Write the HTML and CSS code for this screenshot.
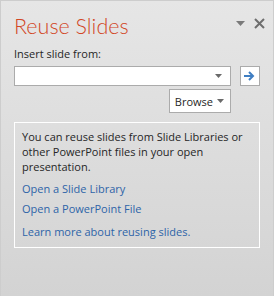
FILE: index.html
```html
<!DOCTYPE html>
<html lang="en">
<head>
  <meta charset="UTF-8" />
  <title>Reuse Slides</title>
  <link rel="stylesheet" href="styles.css">
</head>
<body>
  <div class="pane">
    <div class="header">
      <h1>Reuse Slides</h1>
      <div class="tools">
        <svg class="tool-arrow" width="9" height="5" viewBox="0 0 9 5"><path d="M0 0h9L4.5 5z" fill="#7a7a7a"/></svg>
        <svg class="tool-close" width="11" height="11" viewBox="0 0 11 11"><path d="M1 1l9 9M10 1l-9 9" stroke="#6e6e6e" stroke-width="2"/></svg>
      </div>
    </div>

    <div class="label">Insert slide from:</div>
    <div class="row">
      <div class="combo">
        <svg width="7" height="4" viewBox="0 0 7 4"><path d="M0 0h7L3.5 4z" fill="#6a6a6a"/></svg>
      </div>
      <div class="go">
        <svg width="12" height="10" viewBox="0 0 12 10"><path d="M0 5h9M5 1l4 4-4 4" stroke="#3f7ec2" stroke-width="2" fill="none"/></svg>
      </div>
    </div>
    <div class="browse-row">
      <div class="browse">Browse
        <svg width="7" height="4" viewBox="0 0 7 4"><path d="M0 0h7L3.5 4z" fill="#6a6a6a"/></svg>
      </div>
    </div>

    <div class="info">
      <p>You can reuse slides from Slide Libraries or other PowerPoint files in your open presentation.</p>
      <a href="#">Open a Slide Library</a>
      <a href="#">Open a PowerPoint File</a>
      <a href="#" class="learn">Learn more about reusing slides.</a>
    </div>
  </div>
</body>
</html>
```

FILE: styles.css
```css
body {
  margin: 0;
  font-family: 'Open Sans', 'Noto Sans', sans-serif;
  font-size: 11px;
  color: #262626;
}
.pane {
  width: 274px;
  height: 296px;
  box-sizing: border-box;
  padding: 0 13px 0 13px;
  border: 1px solid #cdcdcd;
  border-bottom: none;
  background: linear-gradient(#e6e6e6, #d3d3d3);
}
.header {
  display: flex;
  justify-content: space-between;
  align-items: flex-start;
  height: 42px;
}
h1 {
  margin: 0;
  font-family: Lato, 'Open Sans', sans-serif;
  font-weight: 300;
  font-size: 21.5px;
  line-height: 26px;
  color: #d24726;
  padding-top: 12px;
}
.tools {
  display: flex;
  align-items: center;
  gap: 9px;
  margin-right: -5px;
  margin-top: 17px;
}
.label {
  margin-top: 3px;
  line-height: 16px;
}
.row {
  display: flex;
  gap: 9px;
  margin-top: 4px;
}
.combo {
  width: 218px;
  height: 20px;
  box-sizing: border-box;
  background: white;
  border: 1px solid #ababab;
  display: flex;
  justify-content: flex-end;
  align-items: center;
  padding-right: 8px;
}
.go {
  width: 20px;
  height: 20px;
  box-sizing: border-box;
  background: white;
  border: 1px solid #ababab;
  display: flex;
  justify-content: center;
  align-items: center;
}
.browse-row {
  display: flex;
  justify-content: flex-end;
  padding-right: 29px;
  margin-top: 3px;
}
.browse {
  width: 62px;
  height: 24px;
  box-sizing: border-box;
  background: white;
  border: 1px solid #ababab;
  display: flex;
  align-items: center;
  justify-content: flex-end;
  gap: 4px;
  padding-right: 6px;
  font-size: 11px;
  white-space: nowrap;
}
.info {
  margin-top: 9px;
  border: 1px solid #ffffff;
  padding: 6px 7px 5px 7px;
  width: 246px;
  box-sizing: border-box;
}
.info p {
  margin: 0 0 5px 0;
  line-height: 15px;
}
.info a {
  display: block;
  color: #2e64a8;
  text-decoration: none;
  line-height: 20px;
}
.info a.learn {
  margin-top: 3px;
}
```
